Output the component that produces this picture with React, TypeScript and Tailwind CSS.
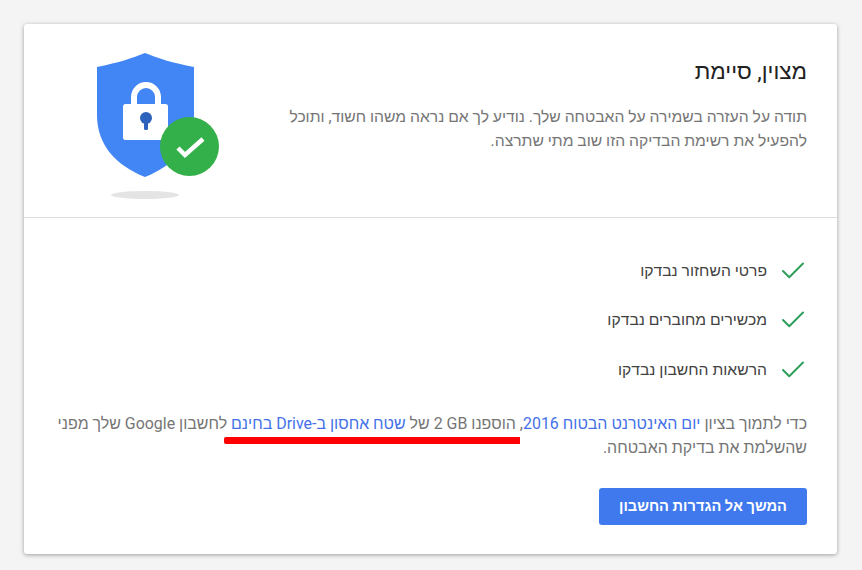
import { Check } from 'lucide-react';

const CHECKS = ['פרטי השחזור נבדקו', 'מכשירים מחוברים נבדקו', 'הרשאות החשבון נבדקו'];

function ShieldArt() {
  return (
    <svg width="126" height="150" viewBox="0 0 126 150" className="shrink-0">
      <ellipse cx="48" cy="142" rx="34" ry="4" fill="#e4e4e4" />
      <path d="M48 0 C60 5 76 10 97 14 L97 62 C97 91 78 112 48 124 C18 112 0 91 0 62 L0 14 C20 10 36 5 48 0 Z" fill="#4285f4" />
      <path d="M37 51 V44 A12 12 0 0 1 61 44 V51" fill="none" stroke="#fff" strokeWidth="6" />
      <rect x="26" y="51" width="45" height="36" rx="2.5" fill="#fff" />
      <circle cx="49" cy="65" r="6" fill="#2d62bd" />
      <rect x="47" y="66" width="4" height="11" rx="1.5" fill="#2d62bd" />
      <circle cx="92.5" cy="93.5" r="29.5" fill="#34b04a" />
      <path d="M81 95 L88 102 L106 86" fill="none" stroke="#fff" strokeWidth="4.5" />
    </svg>
  );
}

export default function App() {
  return (
    <div className="h-[570px] w-[862px] overflow-hidden bg-[#f4f4f4] p-6 font-['Roboto','Liberation_Sans',sans-serif]">
      <div dir="rtl" className="relative h-[530px] w-[813px] rounded-[3px] bg-white shadow-[0_1px_4px_rgba(0,0,0,0.35)]">
        <div className="flex h-[194px] items-start justify-between border-b border-[#dcdcdc] pl-[73px] pr-[30px]">
          <div className="pt-[32px]">
            <h1 className="text-[22.5px] leading-[30px] font-normal text-[#212121]">מצוין, סיימת</h1>
            <p className="mt-[19px] w-[530px] text-[15.7px] leading-[24px] text-[#757575]">
              תודה על העזרה בשמירה על האבטחה שלך. נודיע לך אם נראה משהו חשוד, ותוכל להפעיל את רשימת הבדיקה הזו שוב מתי שתרצה.
            </p>
          </div>
          <div className="pt-[29px]">
            <ShieldArt />
          </div>
        </div>

        <div className="px-[30px] pt-[40px]">
          <ul className="flex flex-col gap-[24.5px]">
            {CHECKS.map((label) => (
              <li key={label} className="flex h-[25px] items-center gap-[11px] text-[15.7px] text-[#424242]">
                <Check className="-mr-[1px] h-[30px] w-[30px] text-[#2e9e5b]" strokeWidth={1.6} />
                {label}
              </li>
            ))}
          </ul>

          <p className="mt-[30px] w-[753px] text-[15.95px] leading-[24px] text-[#757575]">
            כדי לתמוך בציון <span className="text-[#4471e8]">יום האינטרנט הבטוח 2016</span>, הוספנו <span dir="ltr">2 GB</span> של{' '}
            <span className="text-[#4471e8]">שטח אחסון ב-Drive בחינם</span> לחשבון Google שלך מפני שהשלמת את בדיקת האבטחה.
          </p>

          <button className="mt-[28px] h-[37px] w-[208px] rounded-[3px] bg-[#4079ee] text-[14.6px] font-bold text-white">
            המשך אל הגדרות החשבון
          </button>
        </div>

        <div className="absolute left-[200px] top-[413px] h-[7px] w-[296px] rounded-l-[2px] bg-[#fe0000]" />
      </div>
    </div>
  );
}
